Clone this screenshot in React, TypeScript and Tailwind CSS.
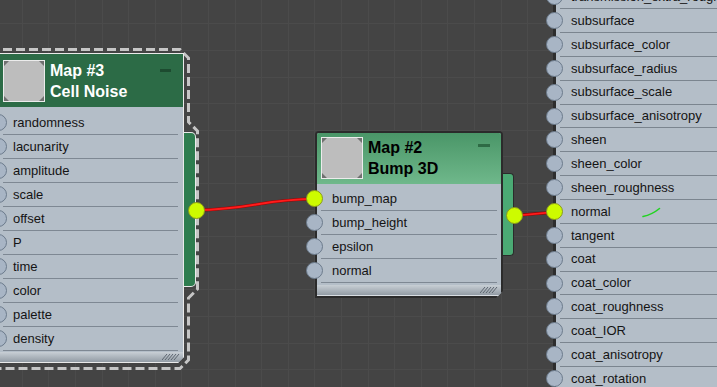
import React from 'react';

const cellNoiseInputs = ['randomness', 'lacunarity', 'amplitude', 'scale', 'offset', 'P', 'time', 'color', 'palette', 'density'];
const bumpInputs = ['bump_map', 'bump_height', 'epsilon', 'normal'];
const surfaceInputs = [
  'transmission_extra_roughness',
  'subsurface',
  'subsurface_color',
  'subsurface_radius',
  'subsurface_scale',
  'subsurface_anisotropy',
  'sheen',
  'sheen_color',
  'sheen_roughness',
  'normal',
  'tangent',
  'coat',
  'coat_color',
  'coat_roughness',
  'coat_IOR',
  'coat_anisotropy',
  'coat_rotation',
  'coat_normal',
];

function Socket({ active, className }: { active?: boolean; className: string }) {
  return (
    <span
      className={`absolute w-[17px] h-[17px] rounded-full border ${
        active ? 'bg-[#cdfb00] border-[#8a9a1c]' : 'bg-[#a8b5c5] border-[#6b7a8b]'
      } ${className}`}
    />
  );
}

function Thumb() {
  return (
    <div className="relative w-[42px] h-[42px] shrink-0 bg-[#bdbdbd] border border-[#ececec]">
      <svg className="absolute inset-0" width="40" height="40" viewBox="0 0 40 40">
        <path d="M0 0h5L0 5z M40 0v5L35 0z M0 40v-5L5 40z M40 40h-5L40 35z" fill="#707070" />
      </svg>
    </div>
  );
}

function Footer({ className }: { className: string }) {
  return (
    <div className={`relative bg-linear-to-b from-[#c8cfd5] to-[#939ca5] ${className}`}>
      <svg className="absolute right-[3px] bottom-[2px]" width="18" height="6" viewBox="0 0 18 6">
        {[0, 3, 6, 9, 12].map((x) => (
          <line key={x} x1={x} y1={6} x2={x + 5} y2={0} stroke="#5c656f" strokeWidth="1" />
        ))}
      </svg>
    </div>
  );
}

function Grid() {
  const xs = Array.from({ length: 28 }, (_, i) => Math.round(21.7 + 26.6 * i) + 0.5);
  const ys = Array.from({ length: 15 }, (_, i) => Math.round(23.3 + 26.6 * i) + 0.5);
  return (
    <svg className="absolute inset-0" width="717" height="387">
      {xs.map((x) => (
        <line key={'x' + x} x1={x} y1={0} x2={x} y2={387} stroke="#4b4b4b" strokeWidth="1" />
      ))}
      {ys.map((y) => (
        <line key={'y' + y} x1={0} y1={y} x2={717} y2={y} stroke="#4b4b4b" strokeWidth="1" />
      ))}
    </svg>
  );
}

export default function App() {
  return (
    <div className="relative w-[717px] h-[387px] overflow-hidden bg-[#444444] font-['Liberation_Sans',Arial,sans-serif] text-[#141414]">
      <Grid />

      {/* selection outline */}
      <svg className="absolute inset-0" width="717" height="387">
        <path
          d="M-10 49.5 H180 L188.5 58 V122 L197.5 131 V289 L188.5 298 V360 L180 368.5 H-10"
          fill="none"
          stroke="#c6c6c6"
          strokeWidth="3"
          strokeDasharray="9 4"
        />
      </svg>

      {/* wires */}
      <svg className="absolute inset-0" width="717" height="387">
        <path d="M196 210 C250 210 262 199 316 199" fill="none" stroke="#a00000" strokeWidth="3" />
        <path d="M196 210 C250 210 262 199 316 199" fill="none" stroke="#ff1c1c" strokeWidth="1.8" />
        <path d="M514.7 215 C532 215 538 212.7 554.3 212.7" fill="none" stroke="#a00000" strokeWidth="3" />
        <path d="M514.7 215 C532 215 538 212.7 554.3 212.7" fill="none" stroke="#ff1c1c" strokeWidth="1.8" />
      </svg>

      {/* Map #3 – Cell Noise */}
      <div className="absolute left-[183px] top-[132px] w-[13px] h-[155px] bg-[#2e7d4f] border border-l-0 border-[#eaeaea] rounded-r-[5px]" />
      <div className="absolute left-[-40px] top-[53px] w-[224px] bg-[#b4bec8] border-t border-r border-b border-[#eaeaea] [clip-path:polygon(-20px_0,100%_0,100%_calc(100%-6px),calc(100%-6px)_100%,-20px_100%)]">
        <div className="flex h-[53px] bg-[#2c6b46] pl-[43px] pt-[6px]">
          <Thumb />
          <div className="ml-[5px] text-white font-bold text-[16px] leading-[21px]">
            <div>Map #3</div>
            <div>Cell Noise</div>
          </div>
          <div className="ml-auto mt-[9px] mr-[12px] w-[11px] h-[3px] bg-[#1d4b30]" />
        </div>
        <div className="pl-[43px] pr-[5px] pt-[4px]">
          {cellNoiseInputs.map((name) => (
            <div key={name} className="relative flex items-center h-6 border-b border-[#7e8893] pl-[10px] text-[13px]">
              <Socket className="left-[-13px] top-[3px]" />
              {name}
            </div>
          ))}
        </div>
        <Footer className="mt-[1px] h-[10px]" />
      </div>
      <Socket active className="left-[187.5px] top-[201.5px]" />

      {/* Map #2 – Bump 3D */}
      <div className="absolute left-[503px] top-[173px] w-[11px] h-[83px] bg-[#4baa74] border border-l-0 border-[#2b2b2b] rounded-r-[4px]" />
      <div className="absolute left-[315px] top-[131px] w-[188px] bg-[#b4bec8] border-2 border-[#2b2b2b] rounded-t-[4px] [clip-path:polygon(-20px_-5px,100%_-5px,100%_calc(100%-7px),calc(100%-7px)_100%,-20px_100%)]">
        <div className="flex h-[51px] bg-linear-to-b from-[#4a9668] to-[#6fb88b] pl-[4px] pt-[4px] rounded-t-[2px]">
          <Thumb />
          <div className="ml-[5px] text-black font-bold text-[16px] leading-[21px]">
            <div>Map #2</div>
            <div>Bump 3D</div>
          </div>
          <div className="ml-auto mt-[7px] mr-[11px] w-[12px] h-[3px] bg-[#2e6b45]" />
        </div>
        <div className="px-[4px] pt-[3px]">
          {bumpInputs.map((name, i) => (
            <div key={name} className="relative flex items-center h-6 border-b border-[#7e8893] pl-[11px] text-[13px]">
              <Socket active={i === 0} className="left-[-15.5px] top-[3px]" />
              {name}
            </div>
          ))}
        </div>
        <Footer className="mt-[2px] h-[11px] border-b border-[#d8dde2]" />
      </div>
      <Socket active className="left-[506px] top-[206.5px]" />

      {/* Standard surface inputs */}
      <div className="absolute left-[553px] top-[-14.6px] right-[-20px] border-l-[3px] border-[#2d2d2d] bg-[#b4bec8] pl-[4px]">
        {surfaceInputs.map((name) => (
          <div key={name} className="relative flex items-center h-[23.85px] border-b border-[#7b858f] pl-[11px] text-[13px] whitespace-nowrap">
            <Socket active={name === 'normal'} className="left-[-14.5px] top-[3px]" />
            {name}
          </div>
        ))}
      </div>

      {/* pen mark */}
      <svg className="absolute inset-0 pointer-events-none" width="717" height="387">
        <path d="M643 216.5 C648 215.5 654 213 659.5 208.5" fill="none" stroke="#22d422" strokeWidth="1.6" strokeLinecap="round" />
      </svg>
    </div>
  );
}
